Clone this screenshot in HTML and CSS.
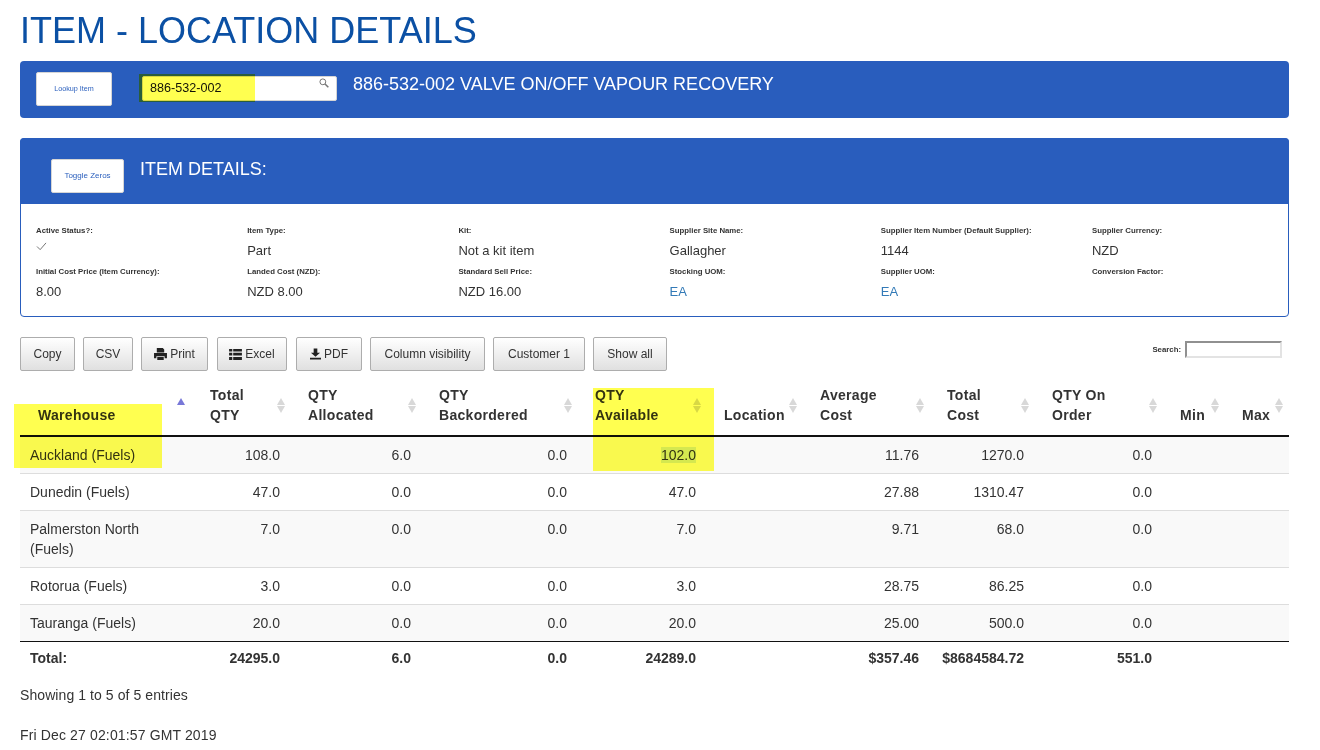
FILE: index.html
```html
<!DOCTYPE html>
<html lang="en">
<head>
<meta charset="utf-8">
<title>Item - Location Details</title>
<link rel="stylesheet" href="styles.css">
</head>
<body>
<h1 class="page-title">ITEM - LOCATION DETAILS</h1>

<section class="lookup-panel">
  <button class="white-btn lookup-btn">Lookup Item</button>
  <div class="lookup-field">
    <span>886-532-002</span>
    <svg class="lookup-icon" viewBox="0 0 12 12" width="10" height="10"><circle cx="4.6" cy="4.6" r="3.5" fill="none" stroke="#777" stroke-width="1.2"/><path d="M7.2 7.2l4 4" stroke="#777" stroke-width="1.8"/></svg>
  </div>
  <h2 class="lookup-title">886-532-002 VALVE ON/OFF VAPOUR RECOVERY</h2>
</section>

<section class="details-panel">
  <header class="details-head">
    <button class="white-btn toggle-btn">Toggle Zeros</button>
    <h2 class="details-title">ITEM DETAILS:</h2>
  </header>
  <div class="details-grid">
    <div class="field"><label>Active Status?:</label><p><svg class="check" viewBox="0 0 12 10" width="11" height="9"><path d="M1 5l3.5 3.5L11 1" fill="none" stroke="#666" stroke-width="1"/></svg></p></div>
    <div class="field"><label>Item Type:</label><p>Part</p></div>
    <div class="field"><label>Kit:</label><p>Not a kit item</p></div>
    <div class="field"><label>Supplier Site Name:</label><p>Gallagher</p></div>
    <div class="field"><label>Supplier Item Number (Default Supplier):</label><p>1144</p></div>
    <div class="field"><label>Supplier Currency:</label><p>NZD</p></div>
    <div class="field"><label>Initial Cost Price (Item Currency):</label><p>8.00</p></div>
    <div class="field"><label>Landed Cost (NZD):</label><p>NZD 8.00</p></div>
    <div class="field"><label>Standard Sell Price:</label><p>NZD 16.00</p></div>
    <div class="field"><label>Stocking UOM:</label><p><a href="#">EA</a></p></div>
    <div class="field"><label>Supplier UOM:</label><p><a href="#">EA</a></p></div>
    <div class="field"><label>Conversion Factor:</label><p></p></div>
  </div>
</section>

<div class="toolbar">
  <div class="tools">
    <button class="tool w-copy">Copy</button>
    <button class="tool w-csv">CSV</button>
    <button class="tool w-print"><svg viewBox="0 0 14 13" width="13" height="12"><path d="M3 0h6.5L11 1.5V5H3zM0 5.5h14V11h-2.5V9h-9v2H0zM3.5 9.8h7V13h-7z" fill="#222"/></svg>Print</button>
    <button class="tool w-excel"><svg viewBox="0 0 14 12" width="13" height="11"><path d="M0 0h3.5v2.8H0zM4.5 0H14v2.8H4.5zM0 4.2h3.5v3H0zM4.5 4.2H14v3H4.5zM0 8.6h3.5V12H0zM4.5 8.6H14V12H4.5z" fill="#222"/></svg>Excel</button>
    <button class="tool w-pdf"><svg viewBox="0 0 12 12" width="11" height="12"><path d="M4 0h4v4.5h3L6 9 1 4.5h3zM0 10h12v2H0z" fill="#222"/></svg>PDF</button>
    <button class="tool w-vis">Column visibility</button>
    <button class="tool w-cust">Customer 1</button>
    <button class="tool w-all">Show all</button>
  </div>
  <div class="table-search"><label>Search:</label><input type="text" aria-label="Search"></div>
</div>

<table class="stock">
  <colgroup>
    <col class="c1"><col class="c2"><col class="c3"><col class="c4"><col class="c5"><col class="c6"><col class="c7"><col class="c8"><col class="c9"><col class="c10"><col class="c11">
  </colgroup>
  <thead>
    <tr>
      <th class="first sorted">Warehouse</th>
      <th>Total<br>QTY</th>
      <th>QTY<br>Allocated</th>
      <th>QTY<br>Backordered</th>
      <th>QTY<br>Available</th>
      <th>Location</th>
      <th>Average<br>Cost</th>
      <th>Total<br>Cost</th>
      <th>QTY On<br>Order</th>
      <th>Min</th>
      <th class="last">Max</th>
    </tr>
  </thead>
  <tbody>
    <tr><td>Auckland (Fuels)</td><td class="n">108.0</td><td class="n">6.0</td><td class="n">0.0</td><td class="n"><span class="sel">102.0</span></td><td></td><td class="n">11.76</td><td class="n">1270.0</td><td class="n">0.0</td><td></td><td></td></tr>
    <tr><td>Dunedin (Fuels)</td><td class="n">47.0</td><td class="n">0.0</td><td class="n">0.0</td><td class="n">47.0</td><td></td><td class="n">27.88</td><td class="n">1310.47</td><td class="n">0.0</td><td></td><td></td></tr>
    <tr><td>Palmerston North (Fuels)</td><td class="n">7.0</td><td class="n">0.0</td><td class="n">0.0</td><td class="n">7.0</td><td></td><td class="n">9.71</td><td class="n">68.0</td><td class="n">0.0</td><td></td><td></td></tr>
    <tr><td>Rotorua (Fuels)</td><td class="n">3.0</td><td class="n">0.0</td><td class="n">0.0</td><td class="n">3.0</td><td></td><td class="n">28.75</td><td class="n">86.25</td><td class="n">0.0</td><td></td><td></td></tr>
    <tr><td>Tauranga (Fuels)</td><td class="n">20.0</td><td class="n">0.0</td><td class="n">0.0</td><td class="n">20.0</td><td></td><td class="n">25.00</td><td class="n">500.0</td><td class="n">0.0</td><td></td><td></td></tr>
  </tbody>
  <tfoot>
    <tr><td>Total:</td><td class="n">24295.0</td><td class="n">6.0</td><td class="n">0.0</td><td class="n">24289.0</td><td></td><td class="n">$357.46</td><td class="n">$8684584.72</td><td class="n">551.0</td><td></td><td></td></tr>
  </tfoot>
</table>

<p class="info">Showing 1 to 5 of 5 entries</p>
<p class="stamp">Fri Dec 27 02:01:57 GMT 2019</p>

<div class="marker m-input"></div>
<div class="marker m-warehouse"></div>
<div class="marker m-available"></div>
</body>
</html>
```

FILE: styles.css
```css
* { box-sizing: border-box; }
html, body { margin: 0; padding: 0; }
body {
  position: relative;
  width: 1320px;
  height: 750px;
  overflow: hidden;
  padding: 0 31px 0 20px;
  background: #fff;
  color: #333;
  font-family: "Liberation Sans", Arial, sans-serif;
  font-size: 14px;
  line-height: 20px;
}
.page-title {
  margin: 0;
  height: 61px;
  padding-top: 11px;
  font-size: 36px;
  line-height: 40px;
  font-weight: 400;
  color: #0b50a4;
}
.white-btn {
  display: block;
  flex: none;
  padding: 0;
  background: #fff;
  border: 1px solid #d5d5d5;
  border-radius: 2px;
  font-family: inherit;
  color: #2a5fbd;
}
.lookup-panel {
  display: flex;
  align-items: flex-start;
  height: 57px;
  padding: 11px 0 0 16px;
  background: #295dbd;
  border-radius: 4px;
  color: #fff;
}
.lookup-btn { width: 76px; height: 34px; font-size: 7.2px; padding-bottom: 2px; }
.lookup-field {
  position: relative;
  width: 195px;
  height: 25px;
  margin: 4px 0 0 30px;
  padding: 1px 0 0 7px;
  background: #fff;
  border: 1px solid #d5d5d5;
  border-radius: 2px;
  color: #111;
  font-size: 12.6px;
  line-height: 20px;
}
.lookup-icon { position: absolute; right: 7px; top: 1px; }
.lookup-title {
  margin: 2px 0 0 16px;
  font-size: 18px;
  line-height: 20px;
  font-weight: 400;
}
.details-panel {
  height: 179px;
  margin-top: 20px;
  border: 1px solid #295dbd;
  border-radius: 4px;
}
.details-head {
  display: flex;
  align-items: flex-start;
  height: 66px;
  margin: -1px -1px 0;
  padding: 21px 0 0 31px;
  background: #295dbd;
  border-radius: 4px 4px 0 0;
  color: #fff;
}
.toggle-btn { width: 73px; height: 34px; font-size: 8px; padding-bottom: 2px; }
.details-title {
  margin: 0 0 0 16px;
  font-size: 18px;
  line-height: 20px;
  font-weight: 400;
}
.details-grid {
  display: grid;
  grid-template-columns: repeat(6, 211.2px);
  grid-auto-rows: 41px;
  padding: 22px 0 0 15px;
}
.field label {
  display: block;
  height: 10px;
  font-size: 7.8px;
  line-height: 10px;
  font-weight: 700;
}
.field p {
  margin: 5px 0 0;
  height: 20px;
  font-size: 13px;
  line-height: 20px;
}
.check { margin-top: 6px; display: block; }
.field a, .field a:visited { color: #337ab7; text-decoration: none; }
.toolbar {
  display: flex;
  justify-content: space-between;
  align-items: flex-start;
  height: 48px;
  margin-top: 20px;
}
.tools { display: flex; gap: 8px; }
.tool {
  display: flex;
  align-items: center;
  justify-content: center;
  gap: 3px;
  height: 34px;
  padding: 0;
  background: linear-gradient(to bottom, #ffffff 0%, #e0e0e0 100%);
  border: 1px solid #adadad;
  border-radius: 2px;
  font-family: inherit;
  font-size: 12px;
  color: #333;
}
.w-copy { width: 55px; }
.w-csv { width: 50px; }
.w-print { width: 67px; }
.w-excel { width: 70px; margin-left: 1px; }
.w-pdf { width: 66px; margin-left: 1px; }
.w-vis { width: 115px; }
.w-cust { width: 92px; }
.w-all { width: 74px; }
.table-search {
  display: flex;
  align-items: center;
  gap: 4px;
  margin: 4px 7px 0 0;
}
.table-search label { font-size: 7.8px; font-weight: 700; line-height: 10px; }
.table-search input {
  width: 97px;
  height: 17px;
  padding: 0;
  background: #fff;
  border-style: solid;
  border-width: 2px;
  border-color: #909090 #e3e3e3 #e3e3e3 #909090;
}
.stock {
  width: 1269px;
  table-layout: fixed;
  border-collapse: collapse;
}
.c1 { width: 180px; }
.c2 { width: 98px; }
.c3 { width: 131px; }
.c4 { width: 156px; }
.c5 { width: 129px; }
.c6 { width: 96px; }
.c7 { width: 127px; }
.c8 { width: 105px; }
.c9 { width: 128px; }
.c10 { width: 62px; }
.c11 { width: 57px; }
.stock th {
  position: relative;
  height: 51px;
  padding: 0 10px 10px;
  text-align: left;
  vertical-align: bottom;
  font-weight: 700;
  letter-spacing: 0.3px;
  border-bottom: 2px solid #111;
}
.stock th.first { padding-left: 18px; }
.stock th::before, .stock th::after {
  content: "";
  position: absolute;
  top: 13px;
  right: 13px;
  border-left: 4px solid transparent;
  border-right: 4px solid transparent;
}
.stock th::before { border-bottom: 7px solid #d8d8d8; }
.stock th::after { top: 21px; border-top: 7px solid #d8d8d8; }
.stock th.sorted::before { right: 15px; border-bottom-color: #7878d8; }
.stock th.sorted::after { display: none; }
.stock th.last::before, .stock th.last::after { right: 6px; }
.stock td {
  padding: 8px 18px 8px 10px;
  vertical-align: top;
  line-height: 20px;
  border-top: 1px solid #ddd;
}
.stock tbody tr:first-child td { border-top: 0; }
.stock tbody tr:nth-child(odd) td { background: #f9f9f9; }
.stock .n { text-align: right; padding-left: 0; }
.stock tfoot td {
  padding-top: 6px;
  font-weight: 700;
  border-top: 1px solid #111;
}
.sel { background: #d5e8ff; }
.info { margin: 0; padding-top: 9px; letter-spacing: 0.08px; }
.stamp { margin: 20px 0 0; letter-spacing: 0.14px; }
.marker {
  position: absolute;
  background: #ffff50;
  mix-blend-mode: multiply;
}
.m-input { left: 139px; top: 74px; width: 116px; height: 28px; }
.m-warehouse { left: 14px; top: 404px; width: 148px; height: 64px; }
.m-available { left: 593px; top: 388px; width: 121px; height: 83px; }
```
